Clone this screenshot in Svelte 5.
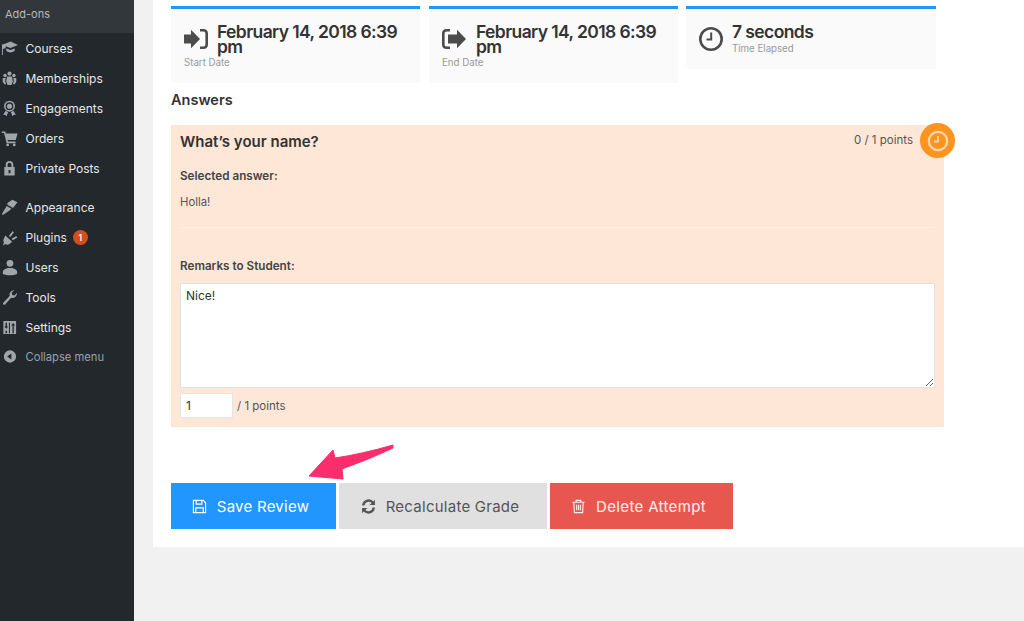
<script>
  const menuTop = [
    { label: 'Courses', icon: 'cap' },
    { label: 'Memberships', icon: 'people' },
    { label: 'Engagements', icon: 'ribbon' },
    { label: 'Orders', icon: 'cart' },
    { label: 'Private Posts', icon: 'lock' }
  ];
  const menuBottom = [
    { label: 'Appearance', icon: 'brush' },
    { label: 'Plugins', icon: 'plug', badge: 1 },
    { label: 'Users', icon: 'user' },
    { label: 'Tools', icon: 'wrench' },
    { label: 'Settings', icon: 'sliders' }
  ];
</script>

{#snippet menuIcon(name)}
  <svg class="menu-icon" viewBox="0 0 18 18" aria-hidden="true">
    {#if name === 'cap'}
      <path d="M10 1.500 18 5.200l-8 3.300-5-2-.2 2.300-2.800.7V16H1V5.500l-.6-.6C3 4.500 7 3 10 1.500Z" />
      <path d="M5.500 9 10 10.700 14.500 9v2.500C13 12.800 11.500 13.200 10 13.200s-3-.5-4.500-1.700Z" />
    {:else if name === 'people'}
      <circle cx="9" cy="3.800" r="2.200" /><circle cx="4.300" cy="5.800" r="1.800" /><circle cx="13.700" cy="5.800" r="1.800" />
      <path d="M6.300 7h5.400l.8 5.500-1.500 3.500H7l-1.500-3.500Z" />
      <path d="M1.800 8.500h3L4.500 12.500 5.500 15H3.500L1.800 12.500ZM16.200 8.500h-3l.3 4L12.500 15h2l1.700-2.500Z" />
    {:else if name === 'ribbon'}
      <path fill-rule="evenodd" d="M9 .8a5.800 5.800 0 1 1 0 11.600A5.800 5.800 0 0 1 9 .8Zm0 1.700a4.100 4.100 0 1 0 0 8.200 4.100 4.100 0 0 0 0-8.200Z" />
      <circle cx="9" cy="6.600" r="2.700" />
      <path d="M4.800 11.500 7.500 13l-1.800 4.500-1.200-1.900-2.200.3ZM13.200 11.500 10.500 13l1.800 4.500 1.200-1.900 2.200.3Z" />
    {:else if name === 'cart'}
      <path d="M.8 1.500H4.500l.6 2.200H17.500l-1.900 7H7l.4 1.600h8v1.600H6L3.200 3.200H.8Z" />
      <circle cx="7" cy="15.800" r="1.500" /><circle cx="14" cy="15.800" r="1.500" />
    {:else if name === 'lock'}
      <path fill-rule="evenodd" d="M5 7.500V5a4 4 0 0 1 8 0v2.500h1.500v9h-11v-9Zm2 0h4V5a2 2 0 0 0-4 0Zm1 3v3.500h2v-3.500Z" />
    {:else if name === 'brush'}
      <path d="M6.800 4.200 12 .8l5.500 2.700-4.800 6-5.900-3.300Z" />
      <path d="M6 7.500 11 10.300 9 12.200 2 17 1 16Z" />
    {:else if name === 'plug'}
      <path d="M4.500 6.800 11.800 13.500 9 16c-1.600 1-3.300.8-4.300-.1L2.700 17.200 2 16.200 3.200 14.500C2.200 12.800 2.400 11 3.400 9.600Z" />
      <path d="m8.300 7.300 3.800-5 1.600 1.200-3.700 5ZM11.200 10.300l5-2.900 1 1.600-4.500 3Z" />
    {:else if name === 'user'}
      <circle cx="9.500" cy="4.600" r="3.600" />
      <path d="M2 13c1-2.500 4-3 5-3.500h5c1 .5 4 1 5 3.500v2.800c-2 1-5 1.300-7.500 1.300S4 16.800 2 15.800Z" />
    {:else if name === 'wrench'}
      <path d="M17 4.500a4.800 4.800 0 0 1-6.300 4.700L4.300 16.500c-1.100.9-3-.7-1.900-2l6.800-7A4.800 4.800 0 0 1 14 1.200L11.300 4l.6 2.400 2.400.6L16.800 4.300Z" />
    {:else if name === 'sliders'}
      <path fill-rule="evenodd" d="M2.500 2h13.500v14H2.500Zm2.300 2v4H3.600l2 2.200 2-2.200H6.300V4Zm0 8.500V15h1.500v-2.500ZM12.200 7h-1.500l2.200-2.800L15 7h-1.400v8h-1.400Zm-3.800-3v11h1.100V4Z" />
    {/if}
  </svg>
{/snippet}

<div class="page">
  <aside class="sidebar">
    <div class="addons">Add-ons</div>
    <ul class="menu first">
      {#each menuTop as item}
        <li>{@render menuIcon(item.icon)}<span>{item.label}</span></li>
      {/each}
    </ul>
    <ul class="menu second">
      {#each menuBottom as item}
        <li>
          {@render menuIcon(item.icon)}<span>{item.label}</span>
          {#if item.badge}<b class="badge">{item.badge}</b>{/if}
        </li>
      {/each}
      <li class="collapse">
        <svg class="menu-icon" viewBox="0 0 18 18" aria-hidden="true">
          <path fill-rule="evenodd" d="M9.500 2.500a6.500 6.500 0 1 1 0 13 6.500 6.500 0 0 1 0-13ZM11 5.800 6.500 9l4.500 3.200Z" />
        </svg>
        <span>Collapse menu</span>
      </li>
    </ul>
  </aside>

  <div class="content">
    <main class="panel">
      <div class="cards">
        <section class="card wrapped">
          <svg class="card-icon" viewBox="0 0 24 22" aria-hidden="true">
            <path d="M0 6.500h7V1.800L16 11l-9 9.200v-4.700H0Z" />
            <path d="M16 1h3.500c2.800 0 4.500 1.700 4.500 4.500v11c0 2.800-1.700 4.500-4.500 4.500H16v-2.600h3.200c1.500 0 2.200-.7 2.200-2.200V5.800c0-1.500-.7-2.200-2.200-2.200H16Z" />
          </svg>
          <h3>February 14, 2018 6:39 pm</h3>
          <small>Start Date</small>
        </section>
        <section class="card wrapped">
          <svg class="card-icon" viewBox="0 0 24 22" aria-hidden="true">
            <path d="M8 1H4.500C1.700 1 0 2.700 0 5.500v11C0 19.300 1.700 21 4.500 21H8v-2.600H4.800c-1.500 0-2.200-.7-2.200-2.200V5.800c0-1.500.7-2.200 2.200-2.200H8Z" />
            <path d="M6 6.500h9V1.800L24 11l-9 9.200v-4.700H6Z" />
          </svg>
          <h3>February 14, 2018 6:39 pm</h3>
          <small>End Date</small>
        </section>
        <section class="card elapsed">
          <svg class="card-icon" viewBox="0 0 24 24" aria-hidden="true">
            <circle class="ring" cx="12" cy="12" r="10.700" />
            <path d="M11.200 5.500h2V13.500H7.500v-2h3.700Z" />
          </svg>
          <div>
            <h3>7 seconds</h3>
            <small>Time Elapsed</small>
          </div>
        </section>
      </div>

      <h2 class="answers">Answers</h2>

      <section class="question">
        <div class="question-head">
          <h4>What’s your name?</h4>
          <span class="points">0 / 1 points</span>
        </div>
        <span class="status" aria-hidden="true">
          <svg viewBox="0 0 24 24">
            <circle cx="12" cy="12" r="10" fill="none" stroke="#fdd9ad" stroke-width="2.500" />
            <path d="M11 6.500h2V13.500H7.500v-2H11Z" fill="#fdd9ad" />
          </svg>
        </span>
        <p class="label">Selected answer:</p>
        <p class="answer">Holla!</p>
        <hr />
        <p class="label remarks">Remarks to Student:</p>
        <textarea readonly>Nice!</textarea>
        <div class="score">
          <input type="text" value="1" readonly />
          <span>/ 1 points</span>
        </div>
      </section>

      <div class="actions">
        <button class="primary">
          <svg viewBox="0 0 16 16" aria-hidden="true" class="stroke">
            <path d="M1.500 1.500h10.500l2.500 2.500v10.500h-13Z" />
            <path d="M4.500 1.500v4h6v-4M4 14.500v-5h8v5" />
          </svg>
          Save Review
        </button>
        <button class="grey">
          <svg viewBox="1.500 1 13 14" aria-hidden="true" class="solid">
            <path d="M2 7A6 6 0 0 1 12.400 3.300L14 1.700v5h-5l1.900-1.900A3.900 3.900 0 0 0 4.200 7Z" />
            <path d="M14 9A6 6 0 0 1 3.600 12.700L2 14.300v-5h5l-1.900 1.900A3.900 3.900 0 0 0 11.800 9Z" />
          </svg>
          Recalculate Grade
        </button>
        <button class="danger">
          <svg viewBox="0 0 16 16" aria-hidden="true" class="stroke">
            <path d="M1.500 3.500h13M5.500 3.500V1.500h5v2M3 3.500l.6 11h8.800l.6-11M6 6v6M8 6v6M10 6v6" />
          </svg>
          Delete Attempt
        </button>
      </div>
      <svg class="arrow" viewBox="0 0 100 45" aria-hidden="true">
        <path d="M93 5Q62 14 35 18L33 10 9 36 43 39 42 29Q70 19 93 8Z" fill="#fb2d6d" stroke="#fb2d6d" stroke-linejoin="round" />
      </svg>
    </main>
  </div>
</div>

<style>
  :global(body) {
    background: #f1f1f1;
    font-family: Inter, "Liberation Sans", sans-serif;
  }

  .page {
    display: flex;
    height: 621px;
    overflow: hidden;
    color: #444;
  }

  .sidebar {
    flex: 0 0 134px;
    background: #23282d;
    color: #e6e7e8;
    font-size: 12px;
  }

  .addons {
    height: 33px;
    padding-left: 5px;
    font-size: 11px;
    line-height: 29px;
    background: #32373c;
    color: #b4b9be;
  }

  .menu {
    margin: 0;
    padding: 0;
    list-style: none;
  }

  .menu.first {
    margin-top: 1px;
  }

  .menu.second {
    margin-top: 10px;
  }

  .menu li {
    display: flex;
    align-items: center;
    height: 29.800px;
    padding-left: 1px;
  }

  .menu-icon {
    flex: none;
    width: 17px;
    height: 17px;
    margin-right: 7.500px;
    fill: #a0a5aa;
  }

  .badge {
    display: grid;
    place-items: center;
    width: 15px;
    height: 15px;
    margin-left: 6px;
    border-radius: 50%;
    background: #d54e21;
    color: #fff;
    font-size: 8.500px;
    font-weight: 600;
  }

  .collapse {
    color: #9ca1a6;
    font-size: 11.200px;
  }

  .content {
    flex: 1;
    padding-left: 19px;
  }

  .panel {
    position: relative;
    box-sizing: border-box;
    height: 547px;
    padding: 6px 0 0 18px;
    background: #fff;
  }

  .cards {
    display: flex;
    align-items: flex-start;
    gap: 9px;
  }

  .card {
    box-sizing: border-box;
    display: flex;
    gap: 9px;
    width: 250px;
    height: 63px;
    padding: 15px 13px 0;
    border-top: 3px solid #2196ff;
    background: #fafafa;
  }

  .card.elapsed {
    margin-left: -1px;
  }

  .card.wrapped {
    display: grid;
    grid-template-columns: 24px 1fr;
    column-gap: 9px;
    align-content: start;
    width: 249px;
    height: 77px;
  }

  .card.wrapped + .card.wrapped {
    column-gap: 10px;
  }

  .card-icon {
    flex: none;
    width: 24px;
    height: 24px;
    margin-top: 3px;
    fill: #4c4c4c;
  }

  .ring {
    fill: none;
    stroke: #4c4c4c;
    stroke-width: 2.600;
  }

  h3 {
    margin: 0;
    color: #333;
    font-size: 17.500px;
    font-weight: 600;
    line-height: 15px;
    letter-spacing: -0.6px;
  }

  small {
    display: block;
    margin-top: 3px;
    color: #999;
    font-size: 9.700px;
    line-height: 13px;
  }

  .wrapped small {
    grid-column: 1 / span 2;
    margin-top: -7px;
  }

  .answers {
    margin: 7px 0 16px;
    color: #333;
    font-size: 14.500px;
    font-weight: 600;
    line-height: 19px;
  }

  .question {
    position: relative;
    box-sizing: border-box;
    width: 773px;
    height: 302px;
    padding: 0 9px;
    background: #fee7d6;
  }

  .question-head {
    display: flex;
    align-items: center;
    justify-content: space-between;
    height: 32px;
    padding-right: 22px;
  }

  h4 {
    margin: 0;
    color: #333;
    font-size: 15px;
    font-weight: 600;
  }

  .points {
    margin-top: -2px;
    font-size: 11.500px;
    color: #555;
  }

  .status {
    position: absolute;
    top: -2px;
    right: -11px;
    display: grid;
    place-items: center;
    width: 35px;
    height: 35px;
    border-radius: 50%;
    background: #fe9320;
  }

  .status svg {
    width: 22px;
    height: 22px;
  }

  p {
    margin: 0;
    font-size: 11px;
    line-height: 16px;
  }

  .label {
    font-size: 11.700px;
    font-weight: 600;
    color: #444;
  }

  .label:first-of-type {
    margin-top: 11px;
  }

  .answer {
    margin-top: 10px;
    font-size: 11.300px;
    color: #555;
  }

  hr {
    height: 1px;
    margin: 17px 0 0;
    border: 0;
    background: #ffefe4;
  }

  .remarks {
    margin-top: 30px;
  }

  textarea {
    display: block;
    box-sizing: border-box;
    width: 100%;
    height: 105px;
    margin-top: 9px;
    padding: 3px 5px;
    border: 1px solid #e1e1e1;
    border-radius: 0;
    outline: 0;
    background: #fff;
    color: #333;
    font: 12px/18px Inter, "Liberation Sans", sans-serif;
  }

  .score {
    display: flex;
    align-items: center;
    gap: 4px;
    margin-top: 5px;
    font-size: 11.500px;
    color: #555;
  }

  input {
    box-sizing: border-box;
    width: 53px;
    height: 25px;
    padding: 0 5px;
    border: 1px solid #e5e5e5;
    background: #fff;
    color: #333;
    font: 12px Inter, "Liberation Sans", sans-serif;
  }

  .actions {
    display: flex;
    gap: 3px;
    margin-top: 56px;
  }

  button {
    display: flex;
    align-items: center;
    justify-content: center;
    gap: 10px;
    height: 46px;
    padding: 0 6px 0 0;
    border: 0;
    font: 15px Inter, "Liberation Sans", sans-serif;
    letter-spacing: 0.25px;
  }

  button svg {
    width: 15px;
    height: 15px;
  }

  .stroke {
    fill: none;
    stroke: currentColor;
    stroke-width: 1.200;
  }

  .solid {
    fill: currentColor;
  }

  .primary {
    width: 165px;
    background: #2196ff;
    color: #fff;
  }

  .grey {
    width: 208px;
    background: #e0e0e0;
    color: #555;
  }

  .danger {
    width: 183px;
    background: #e8574f;
    color: #ffeeee;
    letter-spacing: 0.35px;
  }

  .arrow {
    position: absolute;
    left: 147px;
    top: 440px;
    width: 100px;
    height: 45px;
  }
</style>
